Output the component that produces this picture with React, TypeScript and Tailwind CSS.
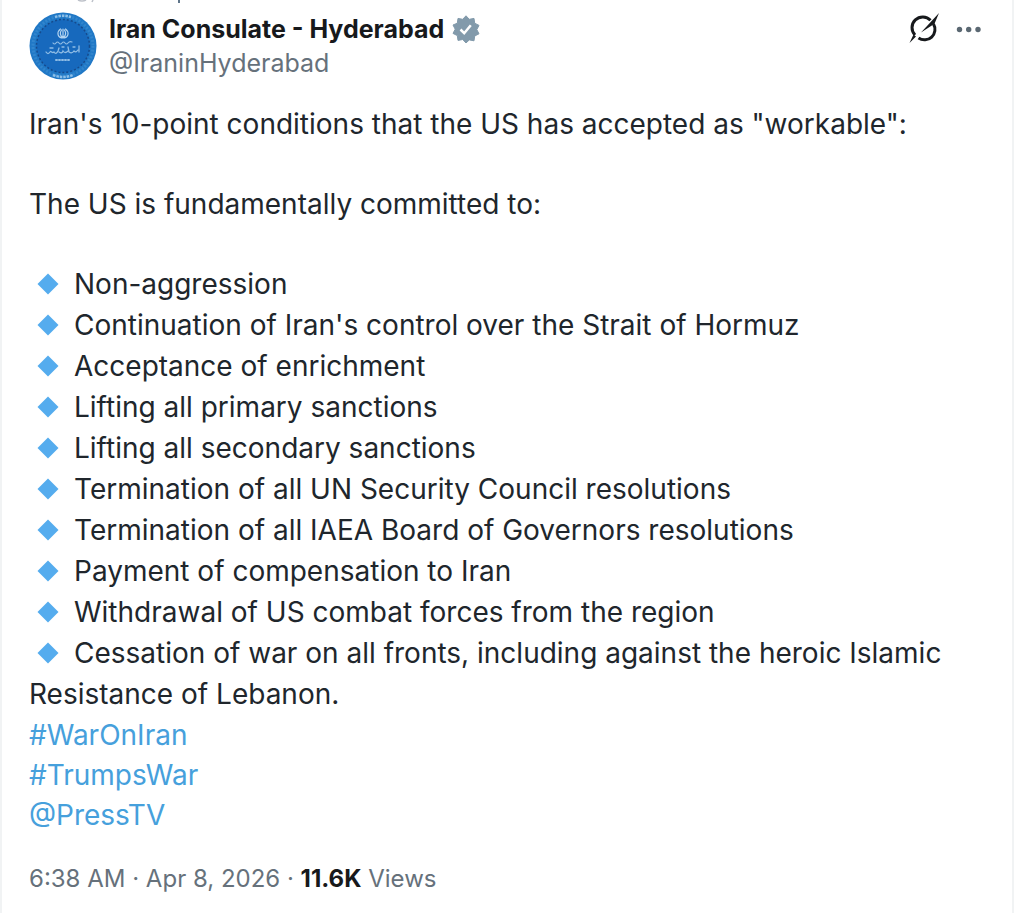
const conditions = [
  'Non-aggression',
  "Continuation of Iran's control over the Strait of Hormuz",
  'Acceptance of enrichment',
  'Lifting all primary sanctions',
  'Lifting all secondary sanctions',
  'Termination of all UN Security Council resolutions',
  'Termination of all IAEA Board of Governors resolutions',
  'Payment of compensation to Iran',
  'Withdrawal of US combat forces from the region',
  'Cessation of war on all fronts, including against the heroic Islamic Resistance of Lebanon.',
];

const links = ['#WarOnIran', '#TrumpsWar', '@PressTV'];

function Avatar() {
  return (
    <svg className="w-[68px] h-[68px] shrink-0" viewBox="0 0 68 68" role="img" aria-label="Iran Consulate - Hyderabad">
      <circle cx="34" cy="34" r="33.5" fill="#2078c6" />
      <circle cx="34" cy="34" r="30" fill="none" stroke="#4c98d6" strokeWidth="3" strokeDasharray="2 1.5" opacity="0.4" />
      <circle cx="34" cy="34" r="26.5" fill="#1769bd" stroke="#164a8c" strokeWidth="1.5" strokeDasharray="2 2" />
      <path d="M24 63q10 4 20 0M26 5q8-2.500 16 0" fill="none" stroke="#8dbfe8" strokeWidth="2.500" strokeDasharray="2.500 1" />
      {/* Emblem */}
      <g fill="none" stroke="#b4d4f0" strokeWidth="1.200" strokeLinecap="round">
        <path d="M34 17v9M31.500 17c-4 3-3 8 1 9M36.500 17c4 3 3 8-1 9M32.500 18c-2 3-1 6 1.500 8M35.500 18c2 3 1 6-1.500 8" />
      </g>
      {/* Script lines */}
      <g fill="none" stroke="#8fbce5" strokeLinecap="round">
        <path d="M24 31q1.500 2 3 0t3 0 3 0 3 0 3 0 4-1" strokeWidth="1.200" />
        <path d="M17 40q2 3 4 0c1-2 2 2 4 0q2 3 4-1l1-3M30 40q3 2 4-1 2 3 5 0M39 35l1 5q3 2 5-1 2 2 4-1M50 34v6M21 36h3M33 35h2M44 35h2" strokeWidth="1.300" />
        <path d="M27 48h14" strokeWidth="2" strokeDasharray="1 2" />
      </g>
    </svg>
  );
}

function VerifiedBadge() {
  return (
    <svg className="w-7 h-7 shrink-0" viewBox="0 0 28 28" role="img" aria-label="Verified account">
      <path
        d="M14 .8l3.300 3.500 4.700-.9.700 4.800 4.300 2.200-2.200 4.200 2.200 4.200-4.300 2.200-.7 4.800-4.700-.9L14 28l-3.300-3.500-4.700.9-.7-4.800L1 18.400l2.200-4.200L1 10l4.300-1.800.7-4.800 4.700.9z"
        fill="#829aab"
        stroke="#829aab"
        strokeLinejoin="round"
      />
      <path d="M8.500 14.500l3.700 3.700 6.600-8" fill="none" stroke="#fff" strokeWidth="2.500" />
    </svg>
  );
}

function GrokIcon() {
  return (
    <svg className="w-8 h-8" viewBox="0 0 32 32" fill="none" aria-hidden="true">
      <path d="M22.500 8.200A10.500 10.500 0 0 0 7 23" stroke="#17191c" strokeWidth="3" />
      <path d="M25.500 12A10.500 10.500 0 0 1 10.500 26" stroke="#17191c" strokeWidth="3" />
      <path d="M31 1L13 20.500l13.500-8.800zM1.500 31l4-8.500 2.500 2z" fill="#17191c" />
    </svg>
  );
}

function Diamond() {
  return (
    <svg className="inline-block w-[22px] h-[22px] ml-2 mr-[15px] -mt-1" viewBox="0 0 22 22" aria-hidden="true">
      <path d="M11 .5L21.500 11 11 21.500.5 11z" fill="#55acee" />
    </svg>
  );
}

export default function App() {
  return (
    <div className="min-h-screen bg-white pr-[10px] font-['Inter',sans-serif] text-[#20262c]">
      <article className="min-h-screen border-x-2 border-[#f1f3f4] pl-[27px] pr-7 pb-4">
        {/* Tail of the line above */}
        <svg className="w-40 h-3 ml-12 block" viewBox="0 0 160 12" fill="none" aria-hidden="true">
          <path d="M1 0q4 2 8 0M16 0l-1 2" stroke="#bdc1c9" strokeWidth="1.500" />
          <path d="M102 0v3" stroke="#60758a" strokeWidth="2" />
        </svg>

        <header className="flex items-start">
          <Avatar />
          <div className="ml-3 min-w-0">
            <div className="flex items-center gap-2">
              <h1 className="text-[25px] leading-[34px] font-bold text-[#17191c]">Iran Consulate - Hyderabad</h1>
              <VerifiedBadge />
            </div>
            <a href="#profile" className="block text-[25px] leading-[34px] text-[#66717b]">
              @IraninHyderabad
            </a>
          </div>
          <div className="ml-auto flex items-center gap-4">
            <button type="button" aria-label="Grok actions">
              <GrokIcon />
            </button>
            <button type="button" aria-label="More">
              <svg className="w-7 h-8" viewBox="0 0 28 32" fill="#5b6872" aria-hidden="true">
                <circle cx="3.500" cy="17.500" r="2.700" />
                <circle cx="12.700" cy="17.500" r="2.700" />
                <circle cx="22" cy="17.500" r="2.700" />
              </svg>
            </button>
          </div>
        </header>

        <div className="mt-6 text-[28px] leading-[40px]">
          <p>Iran's 10-point conditions that the US has accepted as "workable":</p>
          <p className="mt-10">The US is fundamentally committed to:</p>
          <ul className="mt-10 leading-[41px]">
            {conditions.map((condition) => (
              <li key={condition}>
                <Diamond />
                {condition}
              </li>
            ))}
          </ul>
          {links.map((link) => (
            <a key={link} href="#search" className="block w-fit text-[#46a0dc]">
              {link}
            </a>
          ))}
        </div>

        <p className="mt-6 text-2xl leading-[40px] text-[#66717b]">
          <time dateTime="2026-04-08T06:38">6:38 AM · Apr 8, 2026</time> · <strong className="font-bold text-[#17191c]">11.6K</strong> Views
        </p>
      </article>
    </div>
  );
}
